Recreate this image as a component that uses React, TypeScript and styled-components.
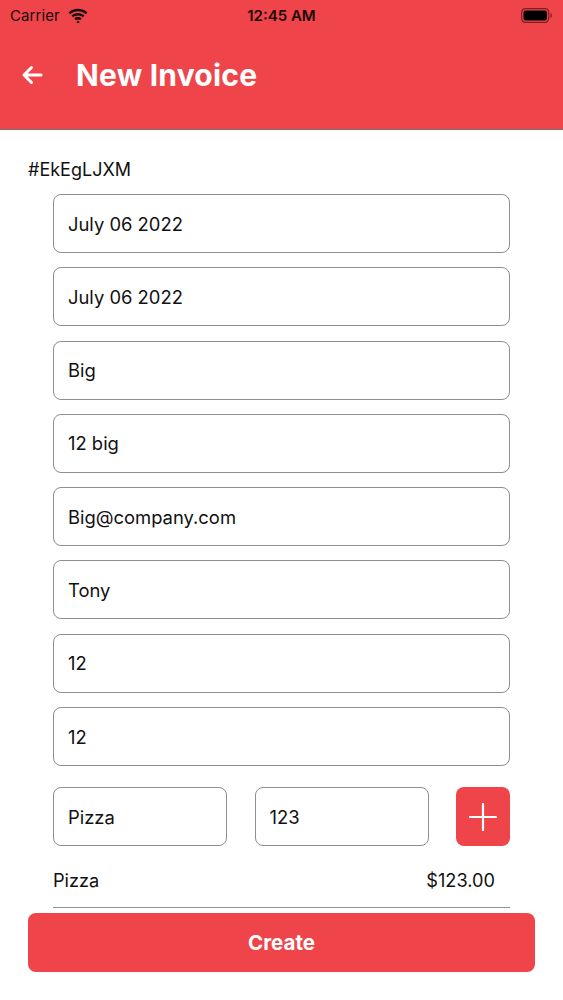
import React from "react";
import styled, { createGlobalStyle } from "styled-components";

const RED = "#ef4449";

const Global = createGlobalStyle`
  html, body { margin: 0; padding: 0; background: #fff; }
  body { font-family: Inter, "Noto Sans", sans-serif; color: #111; }
  * { box-sizing: border-box; }
`;

const Page = styled.div`
  width: 563px;
  height: 1000px;
  display: flex;
  flex-direction: column;
  background: #fff;
  position: relative;
`;

const Header = styled.header`
  height: 130px;
  background: ${RED};
  border-bottom: 1px solid #7a6a6a;
  display: flex;
  flex-direction: column;
`;

const StatusBar = styled.div`
  height: 30px;
  display: flex;
  align-items: center;
  justify-content: space-between;
  padding: 0 10px 0 10px;
  font-size: 15px;
  color: #1a0a0a;
  position: relative;
`;

const Carrier = styled.div`
  display: flex;
  align-items: center;
  gap: 8px;
  letter-spacing: 0.1px;
`;

const Time = styled.div`
  position: absolute;
  left: 0;
  right: 0;
  text-align: center;
  font-weight: 600;
  pointer-events: none;
`;

const NavBar = styled.div`
  flex: 1;
  display: flex;
  align-items: center;
  padding: 0 0 10px 21px;
  gap: 33px;
`;

const Title = styled.h1`
  margin: 0;
  font-family: Inter, Roboto, sans-serif;
  font-weight: 700;
  font-size: 30px;
  color: #fff;
  letter-spacing: 0.2px;
`;

const Body = styled.main`
  display: flex;
  flex-direction: column;
  padding: 28px 0 0 28px;
`;

const Code = styled.div`
  font-size: 18px;
  line-height: 24px;
  margin-bottom: 12px;
`;

const Fields = styled.div`
  display: flex;
  flex-direction: column;
  gap: 14.3px;
  padding-left: 25px;
  width: 482px;
`;

const Field = styled.div<{ $w?: number }>`
  height: 59px;
  width: ${(p) => (p.$w ? `${p.$w}px` : "100%")};
  border: 1px solid #8e8e93;
  border-radius: 8px;
  display: flex;
  align-items: center;
  padding-left: 14px;
  font-size: 18.4px;
  color: #111;
`;

const ItemRow = styled.div`
  display: flex;
  align-items: center;
  justify-content: space-between;
  margin-top: 7px;
`;

const AddButton = styled.div`
  width: 54px;
  height: 59px;
  border-radius: 8px;
  background: ${RED};
  display: flex;
  align-items: center;
  justify-content: center;
`;

const LineItem = styled.div`
  display: flex;
  justify-content: space-between;
  align-items: center;
  height: 61px;
  margin-top: -14px;
  padding: 7px 15px 0 0;
  border-bottom: 1px solid #8e8e93;
  font-size: 18.2px;
`;

const Footer = styled.div`
  position: absolute;
  left: 28px;
  top: 913px;
  width: 507px;
`;

const CreateButton = styled.div`
  height: 59px;
  border-radius: 8px;
  background: ${RED};
  color: #fff;
  font-weight: 700;
  font-size: 20.5px;
  display: flex;
  align-items: center;
  justify-content: center;
`;

const Wifi = () => (
  <svg width="20" height="15" viewBox="0 0 20 15">
    <path d="M10 3.2c3 0 5.7 1.1 7.8 3l1.6-1.7C16.9 2.1 13.6.8 10 .8S3.1 2.1.6 4.5l1.6 1.7c2.1-1.9 4.8-3 7.8-3z" fill="#1a0a0a" />
    <path d="M10 7.4c1.9 0 3.6.7 4.9 1.9l1.6-1.7C14.8 6 12.5 5.1 10 5.1S5.2 6 3.5 7.6l1.6 1.7C6.4 8.1 8.1 7.4 10 7.4z" fill="#1a0a0a" />
    <path d="M10 11.4c.8 0 1.6.3 2.1.8l1.6-1.7c-1-.9-2.3-1.4-3.7-1.4s-2.7.5-3.7 1.4l1.6 1.7c.5-.5 1.3-.8 2.1-.8z" fill="#1a0a0a" />
    <path d="M10 12.6 8.4 14.2 10 15.8l1.6-1.6z" fill="#1a0a0a" />
  </svg>
);

const Battery = () => (
  <svg width="32" height="15" viewBox="0 0 32 15">
    <rect x="0.7" y="0.7" width="27" height="13.6" rx="3.6" fill="none" stroke="#7a1f22" strokeWidth="1.2" />
    <rect x="2.5" y="2.5" width="23.4" height="10" rx="2" fill="#000" />
    <path d="M29.5 5v5c.9-.3 1.4-1.3 1.4-2.5s-.5-2.2-1.4-2.5z" fill="#7a1f22" />
  </svg>
);

const BackArrow = () => (
  <svg width="22" height="20" viewBox="0 0 22 20">
    <path d="M20 10H3M10.5 2.5 3 10l7.5 7.5" fill="none" stroke="#fff" strokeWidth="3" strokeLinecap="round" strokeLinejoin="round" />
  </svg>
);

const Plus = () => (
  <svg width="28" height="28" viewBox="0 0 28 28">
    <path d="M14 1v26M1 14h26" stroke="#fff" strokeWidth="2.2" strokeLinecap="round" />
  </svg>
);

const values = [
  "July 06 2022",
  "July 06 2022",
  "Big",
  "12 big",
  "Big@company.com",
  "Tony",
  "12",
  "12",
];

export default function App() {
  return (
    <Page>
      <Global />
      <Header>
        <StatusBar>
          <Carrier>
            Carrier <Wifi />
          </Carrier>
          <Time>12:45 AM</Time>
          <Battery />
        </StatusBar>
        <NavBar>
          <BackArrow />
          <Title>New Invoice</Title>
        </NavBar>
      </Header>
      <Body>
        <Code>#EkEgLJXM</Code>
        <Fields>
          {values.map((v, i) => (
            <Field key={i}>{v}</Field>
          ))}
          <ItemRow>
            <Field $w={174}>Pizza</Field>
            <Field $w={174}>123</Field>
            <AddButton>
              <Plus />
            </AddButton>
          </ItemRow>
          <LineItem>
            <span>Pizza</span>
            <span>$123.00</span>
          </LineItem>
        </Fields>
      </Body>
      <Footer>
        <CreateButton>Create</CreateButton>
      </Footer>
    </Page>
  );
}
